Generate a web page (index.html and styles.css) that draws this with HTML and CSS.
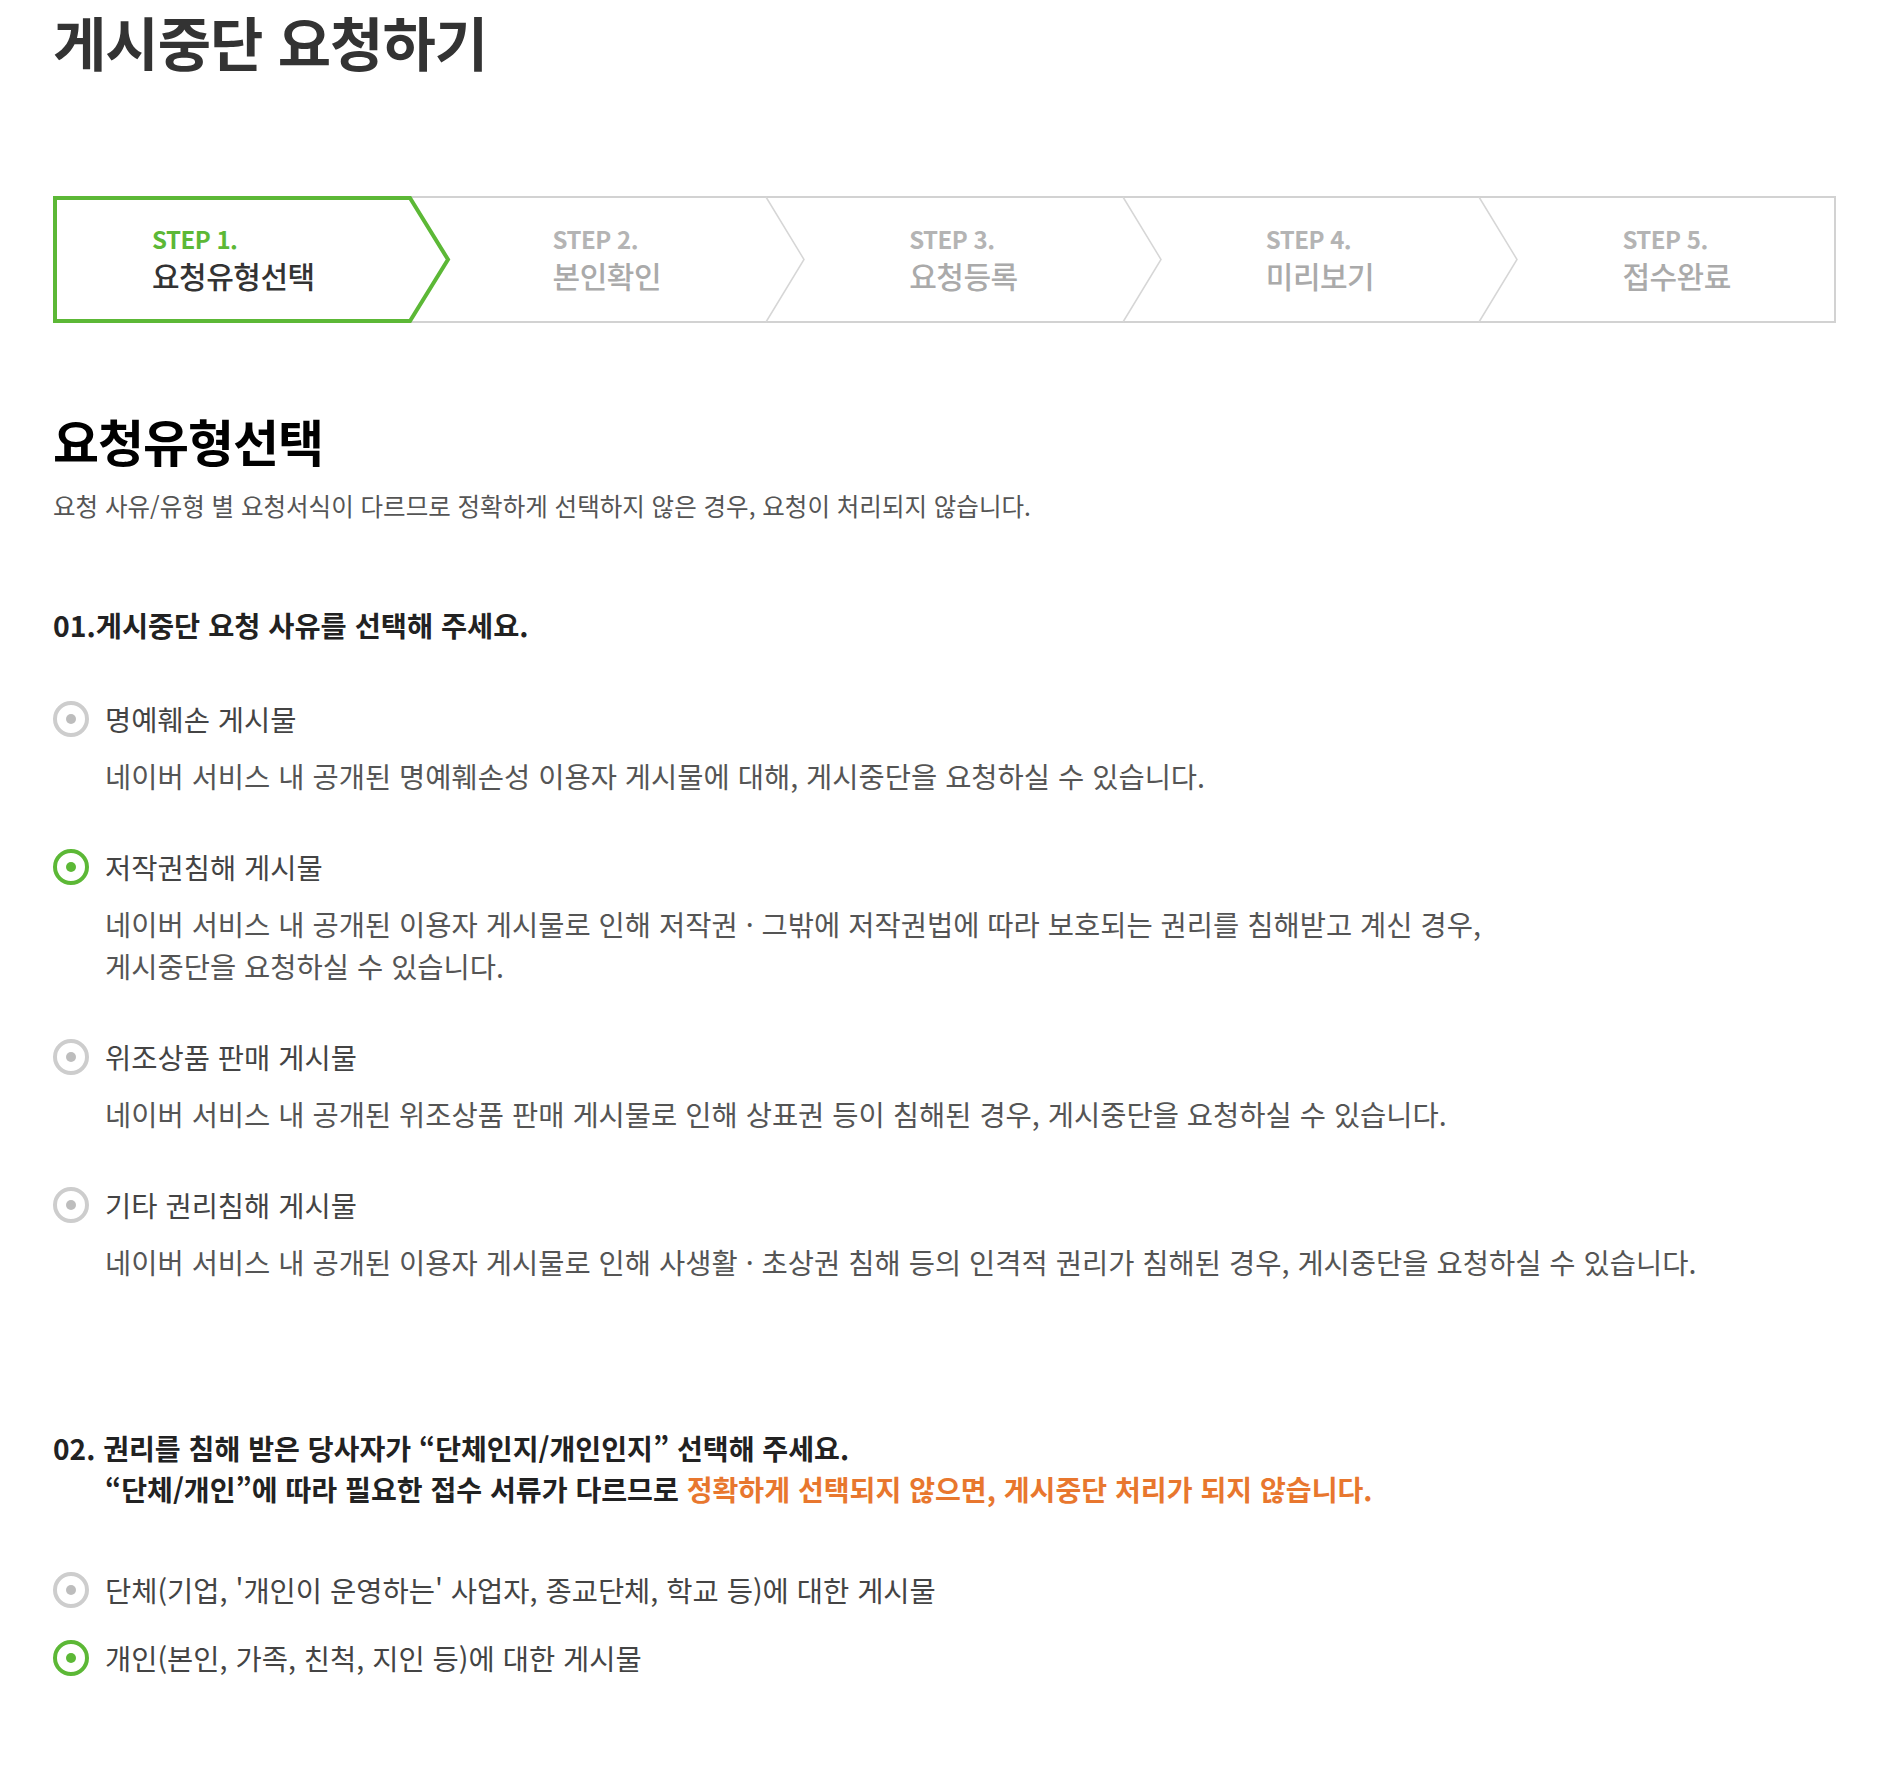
FILE: index.html
```html
<!DOCTYPE html>
<html lang="ko">
<head>
    <meta charset="UTF-8">
    <title>게시중단 요청하기</title>
    <link rel="stylesheet" href="styles.css">
</head>
<body>
    <div class="page">
        <h1 class="page-title">게시중단 요청하기</h1>

        <div class="steps">
            <svg class="steps-frame" width="1783" height="127" viewBox="0 0 1783 127">
                <rect x="1" y="1" width="1781" height="125" fill="none" stroke="#d2d2d2" stroke-width="2"/>
                <polyline points="713,1 751,63.5 713,126" fill="none" stroke="#d6d6d6" stroke-width="1.5"/>
                <polyline points="1070,1 1108,63.5 1070,126" fill="none" stroke="#d6d6d6" stroke-width="1.5"/>
                <polyline points="1426,1 1464,63.5 1426,126" fill="none" stroke="#d6d6d6" stroke-width="1.5"/>
                <polygon points="2,2 357,2 395,63.5 357,125 2,125" fill="none" stroke="#5cb836" stroke-width="4" stroke-linejoin="miter"/>
            </svg>
            <div class="step active">
                <div class="step-text">
                    <span class="step-num">STEP 1.</span>
                    <span class="step-name">요청유형선택</span>
                </div>
            </div>
            <div class="step">
                <div class="step-text">
                    <span class="step-num">STEP 2.</span>
                    <span class="step-name">본인확인</span>
                </div>
            </div>
            <div class="step">
                <div class="step-text">
                    <span class="step-num">STEP 3.</span>
                    <span class="step-name">요청등록</span>
                </div>
            </div>
            <div class="step">
                <div class="step-text">
                    <span class="step-num">STEP 4.</span>
                    <span class="step-name">미리보기</span>
                </div>
            </div>
            <div class="step">
                <div class="step-text">
                    <span class="step-num">STEP 5.</span>
                    <span class="step-name">접수완료</span>
                </div>
            </div>
        </div>

        <h2 class="section-title">요청유형선택</h2>
        <p class="section-desc">요청 사유/유형 별 요청서식이 다르므로 정확하게 선택하지 않은 경우, 요청이 처리되지 않습니다.</p>

        <div class="question">
            <h3 class="question-title">01.게시중단 요청 사유를 선택해 주세요.</h3>
            <ul class="options">
                <li class="option">
                    <div class="option-label"><span class="radio"></span>명예훼손 게시물</div>
                    <p class="option-desc">네이버 서비스 내 공개된 명예훼손성 이용자 게시물에 대해, 게시중단을 요청하실 수 있습니다.</p>
                </li>
                <li class="option">
                    <div class="option-label"><span class="radio checked"></span>저작권침해 게시물</div>
                    <p class="option-desc">네이버 서비스 내 공개된 이용자 게시물로 인해 저작권 · 그밖에 저작권법에 따라 보호되는 권리를 침해받고 계신 경우,<br>게시중단을 요청하실 수 있습니다.</p>
                </li>
                <li class="option">
                    <div class="option-label"><span class="radio"></span>위조상품 판매 게시물</div>
                    <p class="option-desc">네이버 서비스 내 공개된 위조상품 판매 게시물로 인해 상표권 등이 침해된 경우, 게시중단을 요청하실 수 있습니다.</p>
                </li>
                <li class="option">
                    <div class="option-label"><span class="radio"></span>기타 권리침해 게시물</div>
                    <p class="option-desc">네이버 서비스 내 공개된 이용자 게시물로 인해 사생활 · 초상권 침해 등의 인격적 권리가 침해된 경우, 게시중단을 요청하실 수 있습니다.</p>
                </li>
            </ul>
        </div>

        <div class="question question-second">
            <h3 class="question-title">02. 권리를 침해 받은 당사자가 “단체인지/개인인지” 선택해 주세요.<br>
                <span class="question-sub">“단체/개인”에 따라 필요한 접수 서류가 다르므로 <em class="warn">정확하게 선택되지 않으면, 게시중단 처리가 되지 않습니다.</em></span>
            </h3>
            <ul class="options compact">
                <li class="option">
                    <div class="option-label"><span class="radio"></span>단체(기업, '개인이 운영하는' 사업자, 종교단체, 학교 등)에 대한 게시물</div>
                </li>
                <li class="option">
                    <div class="option-label"><span class="radio checked"></span>개인(본인, 가족, 친척, 지인 등)에 대한 게시물</div>
                </li>
            </ul>
        </div>
    </div>
</body>
</html>
```

FILE: styles.css
```css
body {
    margin: 0;
    background: #fff;
    font-family: "Noto Sans CJK KR", "Noto Sans", sans-serif;
    color: #444;
}

.page {
    width: 1783px;
    padding-left: 53px;
    padding-bottom: 40px;
}

.page-title {
    margin: 0;
    font-size: 58px;
    line-height: 82px;
    font-weight: 700;
    color: #333;
    letter-spacing: -1px;
}

/* steps */
.steps {
    position: relative;
    display: flex;
    height: 127px;
    margin-top: 114px;
}

.steps-frame {
    position: absolute;
    top: 0;
    left: 0;
}

.step {
    flex: none;
    width: 20%;
    box-sizing: border-box;
    display: flex;
    align-items: center;
    padding-left: 143px;
}

.step.active {
    padding-left: 99px;
}

.step-text {
    display: flex;
    flex-direction: column;
    gap: 4px;
}

.step-num {
    font-size: 24px;
    line-height: 27px;
    font-weight: 700;
    color: #b4b4b4;
    letter-spacing: -0.5px;
}

.step-name {
    font-size: 30px;
    line-height: 38px;
    font-weight: 500;
    color: #aaa;
    letter-spacing: -0.5px;
}

.step.active .step-num { color: #5cb836; }
.step.active .step-name { color: #333; }

/* section */
.section-title {
    margin: 87px 0 0;
    font-size: 50px;
    line-height: 60px;
    font-weight: 700;
    color: #000;
    letter-spacing: -1px;
}

.section-desc {
    margin: 20px 0 0;
    font-size: 24.5px;
    line-height: 32px;
    color: #555;
}

.question {
    margin-top: 82px;
}

.question-second {
    margin-top: 144px;
}

.question-title {
    margin: 0;
    font-size: 28.4px;
    line-height: 42px;
    font-weight: 700;
    color: #222;
}

.question-second .question-title {
    font-size: 28.1px;
    line-height: 41px;
}

.question-sub {
    padding-left: 52px;
}

.warn {
    font-style: normal;
    color: #e8772e;
}

.options {
    list-style: none;
    margin: 52px 0 0;
    padding: 0;
}

.option {
    margin-bottom: 49px;
}

.option-label {
    display: flex;
    align-items: center;
    gap: 16px;
    font-size: 28.5px;
    line-height: 42px;
    color: #444;
}

.option-desc {
    margin: 15px 0 0;
    padding-left: 52px;
    font-size: 28.5px;
    line-height: 42px;
    color: #555;
}

.options.compact {
    margin-top: 60px;
}

.options.compact .option {
    margin-bottom: 26px;
}

.radio {
    position: relative;
    flex: none;
    width: 28px;
    height: 28px;
    border: 4px solid #cdcdcd;
    border-radius: 50%;
}

.radio::after {
    content: "";
    position: absolute;
    top: 50%;
    left: 50%;
    width: 10px;
    height: 10px;
    margin: -5px 0 0 -5px;
    border-radius: 50%;
    background: #bdbdbd;
}

.radio.checked {
    border-color: #5cb836;
}

.radio.checked::after {
    background: #5cb836;
}
```
